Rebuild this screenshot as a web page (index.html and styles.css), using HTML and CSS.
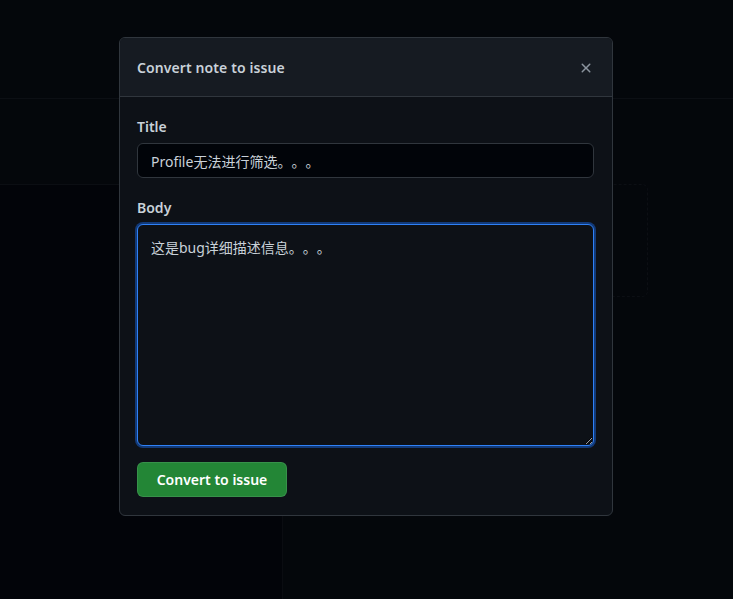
FILE: index.html
```html
<!DOCTYPE html>
<html lang="zh-CN">
<head>
<meta charset="utf-8">
<title>Convert note to issue</title>
<link rel="stylesheet" href="styles.css">
</head>
<body>
<div class="page">
  <div class="topbar"></div>
  <div class="subbar"></div>
  <div class="board">
    <div class="col-left"></div>
    <div class="col-right">
      <div class="ghost-card"></div>
    </div>
  </div>
</div>

<div class="dialog" role="dialog" aria-label="Convert note to issue">
  <div class="dialog-header">
    <h2 class="dialog-title">Convert note to issue</h2>
    <button class="close-btn" type="button" aria-label="Close">
      <svg width="16" height="16" viewBox="0 0 16 16" aria-hidden="true"><path fill="currentColor" d="M3.72 3.72a.75.75 0 0 1 1.06 0L8 6.94l3.22-3.22a.749.749 0 0 1 1.275.326.749.749 0 0 1-.215.734L9.06 8l3.22 3.22a.749.749 0 0 1-.326 1.275.749.749 0 0 1-.734-.215L8 9.06l-3.22 3.22a.751.751 0 0 1-1.042-.018.751.751 0 0 1-.018-1.042L6.94 8 3.72 4.78a.75.75 0 0 1 0-1.06Z"/></svg>
    </button>
  </div>
  <form class="dialog-body">
    <div class="field">
      <label class="label" for="title">Title</label>
      <input class="input" id="title" type="text" value="Profile无法进行筛选。。。">
    </div>
    <div class="field field-body">
      <label class="label" for="body">Body</label>
      <textarea class="textarea" id="body">这是bug详细描述信息。。。</textarea>
    </div>
    <button class="btn-primary" type="button">Convert to issue</button>
  </form>
</div>
</body>
</html>
```

FILE: styles.css
```css
* { box-sizing: border-box; }
html, body { margin: 0; padding: 0; }
body {
  background: #04070b;
  font-family: "Noto Sans", "Noto Sans CJK SC", sans-serif;
  color: #c9d1d9;
  height: 599px;
  overflow: hidden;
  color-scheme: dark;
  text-spacing-trim: space-all;
}
.page {
  display: flex;
  flex-direction: column;
  height: 599px;
}
.topbar {
  height: 99px;
  border-bottom: 1px solid #0c0f14;
  flex: none;
}
.subbar {
  height: 85px;
  flex: none;
}
.board {
  flex: 1;
  display: grid;
  grid-template-columns: 283px 1fr;
}
.col-left {
  background: #020409;
  border-top: 1px solid #0b0e13;
  border-right: 1px solid #0a0c11;
}
.col-right {
  display: flex;
  align-items: flex-start;
}
.ghost-card {
  width: 365px;
  height: 113px;
  border: 1px dashed #0c0f14;
  border-radius: 6px;
}

.dialog {
  position: absolute;
  left: 119px;
  top: 37px;
  width: 494px;
  background: #0d1117;
  border: 1px solid #30363d;
  border-radius: 6px;
  overflow: hidden;
}
.dialog-header {
  height: 59px;
  background: #161b22;
  border-bottom: 1px solid #30363d;
  display: flex;
  align-items: center;
  justify-content: space-between;
  padding: 1px 18px 0 17px;
}
.dialog-title {
  margin: 0;
  font-size: 14px;
  font-weight: 600;
  line-height: 20px;
  color: #c9d1d9;
  letter-spacing: 0.1px;
}
.close-btn {
  border: 0;
  background: none;
  padding: 0;
  width: 16px;
  height: 16px;
  color: #8b949e;
  display: flex;
}
.dialog-body {
  display: flex;
  flex-direction: column;
  align-items: flex-start;
  padding: 20px 18px 18px 17px;
}
.field {
  width: 100%;
  display: flex;
  flex-direction: column;
  margin-bottom: 20px;
}
.field-body { margin-bottom: 16px; }
.label {
  font-size: 14px;
  font-weight: 600;
  line-height: 20px;
  color: #c9d1d9;
  margin-bottom: 6px;
}
.input {
  height: 35px;
  width: 100%;
  background: #010409;
  border: 1px solid #30363d;
  border-radius: 6px;
  padding: 0 13px;
  font: inherit;
  font-size: 14px;
  color: #c9d1d9;
  outline: none;
}
.textarea {
  width: 100%;
  height: 222px;
  background: #0d1117;
  border: 1px solid #2f81f7;
  box-shadow: 0 0 0 2px #123a78;
  border-radius: 6px;
  padding: 13px 13px;
  font: inherit;
  font-size: 14px;
  line-height: 20px;
  color: #c9d1d9;
  outline: none;
  resize: vertical;
}
.btn-primary {
  height: 35px;
  width: 150px;
  background: #238636;
  border: 1px solid rgba(240, 246, 252, 0.1);
  border-radius: 6px;
  color: #ffffff;
  font: inherit;
  font-size: 14px;
  font-weight: 600;
  padding: 0 16px;
}
```
